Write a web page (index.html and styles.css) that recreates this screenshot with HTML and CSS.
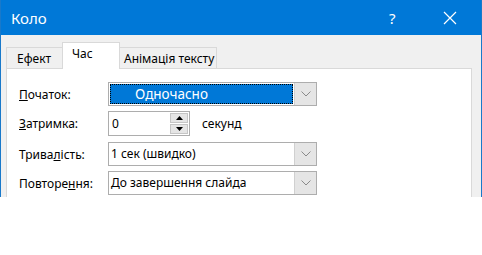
FILE: index.html
```html
<!DOCTYPE html>
<html lang="uk">
<head>
  <meta charset="UTF-8" />
  <title>Коло</title>
  <link rel="stylesheet" href="styles.css">
</head>
<body>

  <div class="vikno">
    <!-- Заголовок -->
    <div class="zagolovok">
      <span class="nazva">Коло</span>
      <span class="dopomoga">?</span>
      <span class="zakryty">
        <svg width="14" height="14" viewBox="0 0 14 14"><path d="M1 1 L13 13 M13 1 L1 13" stroke="#fff" stroke-width="1.2" fill="none"/></svg>
      </span>
    </div>

    <!-- Вкладки -->
    <div class="vkladky">
      <div class="vkladka efekt">Ефект</div>
      <div class="vkladka aktyvna">Час</div>
      <div class="vkladka animaciya">Анімація тексту</div>
    </div>

    <div class="panel">
      <div class="ryadok">
        <span class="mitka"><u>П</u>очаток:</span>
        <div class="kombo">
          <div class="znachennya vybrane"><span>Одночасно</span></div>
          <div class="knopka"><svg width="10" height="6" viewBox="0 0 10 6"><path d="M0.5 0.5 L5 5 L9.5 0.5" stroke="#8a8a8a" fill="none"/></svg></div>
        </div>
      </div>

      <div class="ryadok">
        <span class="mitka"><u>З</u>атримка:</span>
        <div class="lichylnyk">
          <div class="pole">0</div>
          <div class="strilky">
            <div class="strilka"><svg width="7" height="4" viewBox="0 0 7 4"><path d="M0 4 L3.5 0 L7 4 Z" fill="#000"/></svg></div>
            <div class="strilka"><svg width="7" height="4" viewBox="0 0 7 4"><path d="M0 0 L3.5 4 L7 0 Z" fill="#000"/></svg></div>
          </div>
        </div>
        <span class="odynytsi">секунд</span>
      </div>

      <div class="ryadok">
        <span class="mitka">Трива<u>л</u>ість:</span>
        <div class="kombo">
          <div class="znachennya">1 сек (швидко)</div>
          <div class="knopka"><svg width="10" height="6" viewBox="0 0 10 6"><path d="M0.5 0.5 L5 5 L9.5 0.5" stroke="#8a8a8a" fill="none"/></svg></div>
        </div>
      </div>

      <div class="ryadok">
        <span class="mitka">Повторе<u>н</u>ня:</span>
        <div class="kombo">
          <div class="znachennya">До завершення слайда</div>
          <div class="knopka"><svg width="10" height="6" viewBox="0 0 10 6"><path d="M0.5 0.5 L5 5 L9.5 0.5" stroke="#8a8a8a" fill="none"/></svg></div>
        </div>
      </div>
    </div>
  </div>

</body>
</html>
```

FILE: styles.css
```css
body {
  margin: 0;
  background: #fff;
  font-family: "Noto Sans", "Open Sans", sans-serif;
  font-size: 12px;
  color: #000;
}

.vikno {
  width: 482px;
  height: 197px;
  box-sizing: border-box;
  background: #f0f0f0;
  border-left: 1px solid #1979ca;
  border-right: 1px solid #1979ca;
  overflow: hidden;
}

.zagolovok {
  height: 35px;
  background: #0078d7;
  color: #fff;
  display: flex;
  align-items: center;
  padding-left: 10px;
}

.nazva {
  font-size: 15px;
  flex: 1;
}

.dopomoga {
  font-size: 15px;
  width: 12px;
  margin-right: 42px;
}

.zakryty {
  display: flex;
  margin-right: 24px;
}

.vkladky {
  display: flex;
  align-items: flex-end;
  margin-top: 8px;
  padding-left: 5px;
  height: 25px;
}

.vkladka {
  height: 20px;
  line-height: 21px;
  box-sizing: content-box;
  border: 1px solid #d9d9d9;
  border-bottom: none;
  background: #f0f0f0;
  margin-right: -1px;
}

.efekt {
  width: 45px;
  padding-left: 10px;
}

.animaciya {
  width: 92px;
  padding-left: 4px;
}

.vkladka.aktyvna {
  width: 47px;
  height: 26px;
  line-height: 22px;
  background: #fff;
  padding-left: 9px;
  position: relative;
  z-index: 1;
  margin-bottom: -1px;
}

.panel {
  margin-left: 5px;
  width: 466px;
  height: 140px;
  box-sizing: border-box;
  background: #fff;
  border: 1px solid #d9d9d9;
  padding: 13px 0 0 12px;
  display: flex;
  flex-direction: column;
  gap: 5px;
}

.ryadok {
  display: flex;
  align-items: center;
  height: 24px;
}

.ryadok:nth-child(2) {
  height: 25px;
  margin-bottom: 1px;
}

.mitka {
  width: 89px;
}

.kombo {
  width: 209px;
  height: 24px;
  box-sizing: border-box;
  border: 1px solid #adadad;
  display: flex;
  background: #fff;
}

.znachennya {
  flex: 1;
  padding-left: 2px;
  line-height: 22px;
}

.znachennya.vybrane {
  margin: 1px;
  background: #0078d7;
  color: #fff;
  outline: 1px dotted #000;
  outline-offset: -1px;
  font-size: 13.5px;
  line-height: 20px;
  padding-left: 25px;
}

.knopka {
  width: 21px;
  background: #e5e5e5;
  border-left: 1px solid #d0d0d0;
  display: flex;
  align-items: center;
  justify-content: center;
}

.lichylnyk {
  width: 82px;
  height: 25px;
  box-sizing: border-box;
  border: 1px solid #adadad;
  display: flex;
}

.pole {
  flex: 1;
  padding-left: 3px;
  line-height: 23px;
}

.strilky {
  width: 18px;
  display: flex;
  flex-direction: column;
  gap: 1px;
  padding: 1px 1px 1px 0;
}

.strilka {
  flex: 1;
  background: #e5e5e5;
  border: 1px solid #c5c5c5;
  display: flex;
  align-items: center;
  justify-content: center;
}

.odynytsi {
  margin-left: 12px;
}
```
